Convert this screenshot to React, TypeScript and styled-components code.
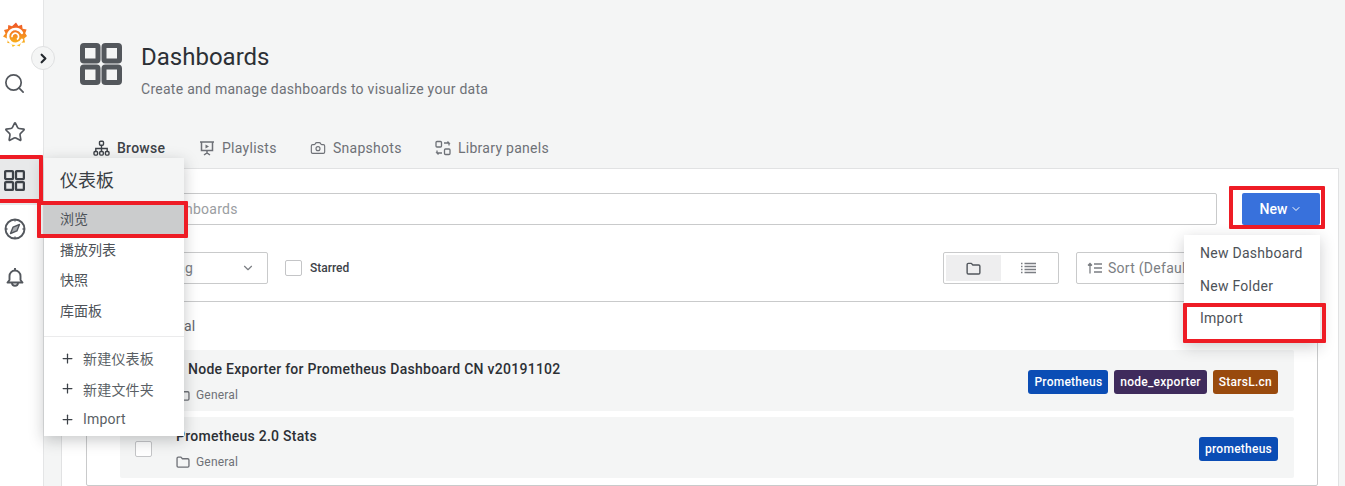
import React from 'react';
import styled, { createGlobalStyle } from 'styled-components';
import { Camera, ChevronDown, ChevronRight, Plus, Search, Star } from 'lucide-react';

const GlobalStyle = createGlobalStyle`
    html, body {
        margin: 0;
        padding: 0;
        background: #ffffff;
        overflow: hidden;
    }
    body {
        font-family: Roboto, "Noto Sans CJK SC", sans-serif;
        color: #24292e;
    }
`;

const Page = styled.div`
    position: relative;
    display: flex;
    width: 1345px;
    height: 486px;
    overflow: hidden;
`;

const SideBar = styled.nav`
    display: flex;
    flex-direction: column;
    flex: none;
    width: 43px;
    padding-top: 11px;
    background: #ffffff;
    border-right: 1px solid #e4e5e6;
`;

const SideItem = styled.div<{ $active?: boolean }>`
    display: flex;
    align-items: center;
    justify-content: center;
    flex: none;
    width: 29px;
    padding-right: 14px;
    height: 48.5px;
    color: ${p => (p.$active ? '#3d4248' : '#53575d')};
    background: ${p => (p.$active ? '#e8e9ea' : 'transparent')};
`;

const Main = styled.main`
    display: flex;
    flex-direction: column;
    flex: 1;
    min-width: 0;
    background: #f4f5f5;
`;

const Header = styled.header`
    display: flex;
    flex: none;
    align-items: flex-start;
    gap: 19px;
    padding: 43px 0 0 36px;
    height: 70px;
    color: #53575c;
`;

const HeaderText = styled.div`
    display: flex;
    flex-direction: column;
`;

const Title = styled.h1`
    margin: 0;
    font-size: 24px;
    font-weight: 400;
    line-height: 28px;
    color: #2c3035;
`;

const Subtitle = styled.div`
    margin-top: 8px;
    font-size: 14px;
    line-height: 20px;
    letter-spacing: 0.27px;
    color: #6e7177;
`;

const Tabs = styled.div`
    display: flex;
    flex: none;
    align-items: center;
    height: 55px;
    padding: 15px 0 0 49px;
    box-sizing: border-box;
`;

const Tab = styled.div<{ $active?: boolean; $width: number }>`
    display: flex;
    align-items: center;
    gap: 7px;
    width: ${p => p.$width}px;
    font-size: 14px;
    font-weight: ${p => (p.$active ? 500 : 400)};
    letter-spacing: 0.27px;
    color: ${p => (p.$active ? '#3d4248' : '#6e7177')};
    svg {
        flex: none;
    }
`;

const Panel = styled.section`
    flex: 1;
    min-height: 0;
    margin: 0 6px 0 17px;
    padding: 24px 18px 0 24px;
    background: #ffffff;
    border: 1px solid #e1e2e3;
    border-bottom: none;
    box-sizing: border-box;
`;

const SearchRow = styled.div`
    display: flex;
    gap: 25px;
`;

const SearchInput = styled.div`
    flex: 1;
    height: 32px;
    padding-left: 26px;
    box-sizing: border-box;
    border: 1px solid #c9cacb;
    border-radius: 2px;
    font-size: 14px;
    line-height: 30px;
    letter-spacing: 0.27px;
    color: #9a9da1;
`;

const NewButton = styled.div`
    display: flex;
    align-items: center;
    justify-content: center;
    gap: 3px;
    width: 78px;
    height: 32px;
    border-radius: 2px;
    background: #3871dc;
    color: #ffffff;
    font-size: 14px;
    font-weight: 500;
`;

const FilterRow = styled.div`
    display: flex;
    align-items: center;
    margin-top: 27px;
    height: 32px;
`;

const TagSelect = styled.div`
    display: flex;
    align-items: center;
    justify-content: space-between;
    width: 182px;
    height: 32px;
    padding: 0 12px 0 30px;
    box-sizing: border-box;
    border: 1px solid #c9cacb;
    border-radius: 2px;
    font-size: 14px;
    letter-spacing: 0.27px;
    color: #7b7e83;
`;

const Check = styled.div`
    flex: none;
    width: 17px;
    height: 16px;
    box-sizing: border-box;
    background: #ffffff;
    border: 1px solid #c4c5c7;
    border-radius: 2px;
`;

const StarredCheck = styled(Check)`
    margin-left: 17px;
`;

const StarredLabel = styled.span`
    margin-left: 8px;
    font-size: 12px;
    font-weight: 500;
    color: #3d4248;
`;

const LayoutToggle = styled.div`
    display: flex;
    margin-left: auto;
    width: 116px;
    height: 32px;
    padding: 2px;
    box-sizing: border-box;
    border: 1px solid #c9cacb;
    border-radius: 2px;
`;

const ToggleOption = styled.div<{ $active?: boolean }>`
    display: flex;
    align-items: center;
    justify-content: center;
    flex: 1;
    background: ${p => (p.$active ? '#eeeeef' : 'transparent')};
    color: #51565c;
`;

const SortSelect = styled.div`
    display: flex;
    align-items: center;
    gap: 6px;
    width: 244px;
    height: 32px;
    margin-left: 17px;
    padding-left: 10px;
    box-sizing: border-box;
    border: 1px solid #c9cacb;
    border-radius: 2px;
    font-size: 14px;
    letter-spacing: 0.27px;
    color: #7b7e83;
`;

const ListBox = styled.div`
    margin: 17px 2px 0 0;
    padding: 0 23px 0 33px;
    height: 185px;
    box-sizing: border-box;
    border: 1px solid #c9cacb;
    border-radius: 2px;
`;

const SectionLabel = styled.div`
    height: 48px;
    padding: 14px 0 0 26px;
    box-sizing: border-box;
    font-size: 14px;
    line-height: 20px;
    letter-spacing: 0.27px;
    color: #62666c;
`;

const Row = styled.div`
    display: flex;
    align-items: center;
    height: 61px;
    margin-bottom: 6px;
    padding: 2px 16px 0 15px;
    box-sizing: border-box;
    background: #f4f5f5;
    border-radius: 2px;
`;

const RowText = styled.div`
    display: flex;
    flex-direction: column;
    margin-left: 24px;
`;

const RowTitle = styled.div`
    font-size: 14px;
    font-weight: 500;
    line-height: 20px;
    letter-spacing: 0.27px;
    color: #2c3035;
`;

const RowFolder = styled.div`
    display: flex;
    align-items: center;
    gap: 6px;
    margin-top: 6px;
    font-size: 12px;
    line-height: 20px;
    letter-spacing: 0.2px;
    color: #6e7177;
`;

const RowTags = styled.div`
    display: flex;
    gap: 6px;
    margin-left: auto;
`;

const Tag = styled.span<{ $color: string }>`
    display: flex;
    align-items: center;
    height: 24px;
    padding: 0 6px;
    border-radius: 3px;
    background: ${p => p.$color};
    color: #ffffff;
    font-size: 12px;
    font-weight: 500;
    letter-spacing: 0.25px;
`;

const Collapse = styled.div`
    position: absolute;
    left: 31px;
    top: 46px;
    display: flex;
    align-items: center;
    justify-content: center;
    width: 24px;
    height: 24px;
    box-sizing: border-box;
    border-radius: 50%;
    background: #f4f5f5;
    border: 1px solid #dfe0e1;
    color: #24292e;
`;

const NavMenu = styled.div`
    position: absolute;
    left: 44px;
    top: 158px;
    display: flex;
    flex-direction: column;
    width: 140px;
    height: 278px;
    background: #ffffff;
    box-shadow: 0 4px 14px rgba(30, 34, 40, 0.25);
`;

const NavMenuTitle = styled.div`
    height: 46px;
    padding-left: 16px;
    font-size: 18px;
    line-height: 46px;
    background: #f4f5f5;
    color: #3a3f45;
`;

const NavMenuItem = styled.div<{ $active?: boolean }>`
    height: 30.5px;
    padding-left: 16px;
    font-size: 14px;
    line-height: 30px;
    color: #4d5258;
    background: ${p => (p.$active ? '#cbcccd' : 'transparent')};
`;

const NavMenuDivider = styled.div`
    height: 1px;
    margin: 10px 0 6px;
    background: #ebebec;
`;

const NavMenuAction = styled.div`
    display: flex;
    align-items: center;
    gap: 8px;
    height: 30.5px;
    padding-left: 16px;
    font-size: 14px;
    letter-spacing: 0.2px;
    color: #5a5f65;
    svg {
        color: #3d4248;
    }
`;

const NewMenu = styled.div`
    position: absolute;
    left: 1184px;
    top: 235px;
    display: flex;
    flex-direction: column;
    width: 136px;
    height: 108px;
    padding-top: 2px;
    box-sizing: border-box;
    background: #ffffff;
    box-shadow: 0 4px 14px rgba(30, 34, 40, 0.22);
`;

const NewMenuItem = styled.div`
    height: 32.5px;
    padding-left: 16px;
    font-size: 14px;
    line-height: 32px;
    letter-spacing: 0.27px;
    color: #4d5258;
`;

const Highlight = styled.div<{ $x: number; $y: number; $w: number; $h: number }>`
    position: absolute;
    left: ${p => p.$x}px;
    top: ${p => p.$y}px;
    width: ${p => p.$w}px;
    height: ${p => p.$h}px;
    box-sizing: border-box;
    border: 4px solid #ee1c25;
    border-radius: 1px;
    pointer-events: none;
`;

function GrafanaLogo() {
    return (
        <svg width="24" height="26" viewBox="0 0 24 26">
            <defs>
                <linearGradient id="grafana" x1="0" y1="1" x2="0" y2="0">
                    <stop offset="0" stopColor="#fbc31a" />
                    <stop offset="1" stopColor="#ef5127" />
                </linearGradient>
            </defs>
            <path
                fill="url(#grafana)"
                d="M13 .5l2.4 3.6 3.6-1.3.6 4 4 .8-1.4 3.6L24 14l-2.8 2.6.8 3.9-3.9.3-1.6 3.7-3.5-1.8-3.3 2.3-1.4-3.8-4-.2.7-3.9L0 14.5l2.5-2.9L1 8l3.9-.9.4-4 3.7 1.100z"
            />
            <path
                fill="none"
                stroke="#ffffff"
                strokeWidth="2.6"
                strokeLinecap="round"
                d="M18.9 10.8A7.4 7.4 0 1 0 19 17.8"
            />
            <path
                fill="none"
                stroke="#ffffff"
                strokeWidth="1.7"
                strokeLinecap="round"
                d="M9 14.5a3.3 3.3 0 1 1 5.5 2.5"
            />
        </svg>
    );
}

function AppsIcon({ size, width }: { size: number; width: number }) {
    return (
        <svg width={size} height={size} viewBox="0 0 42 42" fill="none" stroke="currentColor" strokeWidth={width}>
            <rect x={width / 2} y={width / 2} width={18 - width / 2} height={18 - width / 2} rx="1.5" />
            <rect x={24} y={width / 2} width={18 - width / 2} height={18 - width / 2} rx="1.5" />
            <rect x={width / 2} y={24} width={18 - width / 2} height={18 - width / 2} rx="1.5" />
            <rect x={24} y={24} width={18 - width / 2} height={18 - width / 2} rx="1.5" />
        </svg>
    );
}

function CompassIcon() {
    return (
        <svg width="22" height="22" viewBox="0 0 22 22" fill="none" stroke="currentColor" strokeWidth="1.9">
            <circle cx="11" cy="11" r="9.5" />
            <path d="M11 1.5v2M11 18.5v2M1.5 11h2M18.5 11h2" strokeWidth="1.3" />
            <path d="M15.5 6.500l-2.600 6.400-6.400 2.600 2.600-6.400z" fill="#a9acb0" strokeWidth="1.4" strokeLinejoin="round" />
        </svg>
    );
}

function BellIcon() {
    return (
        <svg width="18" height="21" viewBox="0 0 18 21" fill="none" stroke="currentColor" strokeWidth="1.9" strokeLinejoin="round">
            <path d="M9 1v2M3.500 13V9a5.500 5.500 0 0 1 11 0v4l2 2.500H1.500z" />
            <path d="M6 15.800a3 3 0 0 0 6 0" />
        </svg>
    );
}

function SitemapIcon() {
    return (
        <svg width="17" height="17" viewBox="0 0 17 17" fill="none" stroke="currentColor" strokeWidth="1.4">
            <rect x="6.500" y="1.200" width="4" height="4" rx="1" />
            <rect x="1" y="11.500" width="3.600" height="3.600" rx="1" />
            <rect x="6.700" y="11.500" width="3.600" height="3.600" rx="1" />
            <rect x="12.400" y="11.500" width="3.600" height="3.600" rx="1" />
            <path d="M8.500 5.200v6.300M2.800 11.500V8.500h11.400v3" />
        </svg>
    );
}

function PlaylistIcon() {
    return (
        <svg width="16" height="16" viewBox="0 0 16 16" fill="none" stroke="currentColor" strokeWidth="1.5">
            <path d="M1 2h14M2.500 2v8.500h11V2M8 10.500V13M5 15l3-2 3 2" />
            <path d="M6.500 4.500l3.500 2-3.500 2z" fill="currentColor" stroke="none" />
        </svg>
    );
}

function LibraryIcon() {
    return (
        <svg width="16" height="16" viewBox="0 0 16 16" fill="none" stroke="currentColor" strokeWidth="1.3">
            <rect x="1" y="1.500" width="5.500" height="5.500" rx="1" />
            <rect x="9.500" y="9" width="5.500" height="5.500" rx="1" />
            <path d="M9 3h5l-1.500-1.500M14 3v2.500M7 13H2l1.500 1.500M2 13v-2.500" />
        </svg>
    );
}

function FolderIcon({ size }: { size: number }) {
    return (
        <svg width={size} height={size} viewBox="0 0 16 16" fill="none" stroke="currentColor" strokeWidth="1.5" strokeLinejoin="round">
            <path d="M1.200 3.800c0-.8.600-1.300 1.300-1.300h3.200l1.600 1.800h6.200c.7 0 1.300.6 1.300 1.300v6.900c0 .7-.6 1.300-1.300 1.300h-11c-.7 0-1.300-.6-1.300-1.300z" />
        </svg>
    );
}

function ListIcon() {
    return (
        <svg width="15" height="12" viewBox="0 0 15 12" fill="none" stroke="#7b7e83" strokeWidth="1.3">
            <path d="M3.500 1.500H15M3.500 4.500H15M3.500 7.500H15M3.500 10.500H15M0 1.500h1.500M0 4.500h1.500M0 7.500h1.500M0 10.500h1.500" />
        </svg>
    );
}

function SortIcon() {
    return (
        <svg width="15" height="12" viewBox="0 0 15 12" fill="none" stroke="currentColor" strokeWidth="1.3">
            <path d="M3 11.500V1.500M1 3.500l2-2 2 2M7 2h8M7 6h8M7 10h8" />
        </svg>
    );
}

export default function App() {
    return (
        <Page>
            <GlobalStyle />
            <SideBar>
                <SideItem><GrafanaLogo /></SideItem>
                <SideItem><Search size={23} strokeWidth={1.8} /></SideItem>
                <SideItem><Star size={22} strokeWidth={1.8} /></SideItem>
                <SideItem $active><AppsIcon size={21} width={4.5} /></SideItem>
                <SideItem><CompassIcon /></SideItem>
                <SideItem><BellIcon /></SideItem>
            </SideBar>

            <Main>
                <Header>
                    <AppsIcon size={42} width={5} />
                    <HeaderText>
                        <Title>Dashboards</Title>
                        <Subtitle>Create and manage dashboards to visualize your data</Subtitle>
                    </HeaderText>
                </Header>

                <Tabs>
                    <Tab $active $width={106}><SitemapIcon />Browse</Tab>
                    <Tab $width={111}><PlaylistIcon />Playlists</Tab>
                    <Tab $width={125}><Camera size={16} strokeWidth={1.7} />Snapshots</Tab>
                    <Tab $width={130}><LibraryIcon />Library panels</Tab>
                </Tabs>

                <Panel>
                    <SearchRow>
                        <SearchInput>Search dashboards</SearchInput>
                        <NewButton>New <ChevronDown size={12} strokeWidth={2} /></NewButton>
                    </SearchRow>

                    <FilterRow>
                        <TagSelect>Filter by tag<ChevronDown size={14} strokeWidth={2} /></TagSelect>
                        <StarredCheck />
                        <StarredLabel>Starred</StarredLabel>
                        <LayoutToggle>
                            <ToggleOption $active><FolderIcon size={15} /></ToggleOption>
                            <ToggleOption><ListIcon /></ToggleOption>
                        </LayoutToggle>
                        <SortSelect><SortIcon />Sort (Default A-Z)</SortSelect>
                    </FilterRow>

                    <ListBox>
                        <SectionLabel>General</SectionLabel>
                        <Row>
                            <Check />
                            <RowText>
                                <RowTitle>1 Node Exporter for Prometheus Dashboard CN v20191102</RowTitle>
                                <RowFolder><FolderIcon size={14} />General</RowFolder>
                            </RowText>
                            <RowTags>
                                <Tag $color="#0b4db5">Prometheus</Tag>
                                <Tag $color="#3f2b5c">node_exporter</Tag>
                                <Tag $color="#994a0d">StarsL.cn</Tag>
                            </RowTags>
                        </Row>
                        <Row>
                            <Check />
                            <RowText>
                                <RowTitle>Prometheus 2.0 Stats</RowTitle>
                                <RowFolder><FolderIcon size={14} />General</RowFolder>
                            </RowText>
                            <RowTags>
                                <Tag $color="#0b4db5">prometheus</Tag>
                            </RowTags>
                        </Row>
                    </ListBox>
                </Panel>
            </Main>

            <Collapse><ChevronRight size={15} strokeWidth={3.5} /></Collapse>

            <NavMenu>
                <NavMenuTitle>仪表板</NavMenuTitle>
                <NavMenuItem $active>浏览</NavMenuItem>
                <NavMenuItem>播放列表</NavMenuItem>
                <NavMenuItem>快照</NavMenuItem>
                <NavMenuItem>库面板</NavMenuItem>
                <NavMenuDivider />
                <NavMenuAction><Plus size={15} strokeWidth={2} />新建仪表板</NavMenuAction>
                <NavMenuAction><Plus size={15} strokeWidth={2} />新建文件夹</NavMenuAction>
                <NavMenuAction><Plus size={15} strokeWidth={2} />Import</NavMenuAction>
            </NavMenu>

            <NewMenu>
                <NewMenuItem>New Dashboard</NewMenuItem>
                <NewMenuItem>New Folder</NewMenuItem>
                <NewMenuItem>Import</NewMenuItem>
            </NewMenu>

            <Highlight $x={-4} $y={155} $w={47} $h={48} />
            <Highlight $x={37} $y={201} $w={151} $h={37} />
            <Highlight $x={1229} $y={186} $w={96} $h={43} />
            <Highlight $x={1183} $y={303} $w={143} $h={40} />
        </Page>
    );
}
